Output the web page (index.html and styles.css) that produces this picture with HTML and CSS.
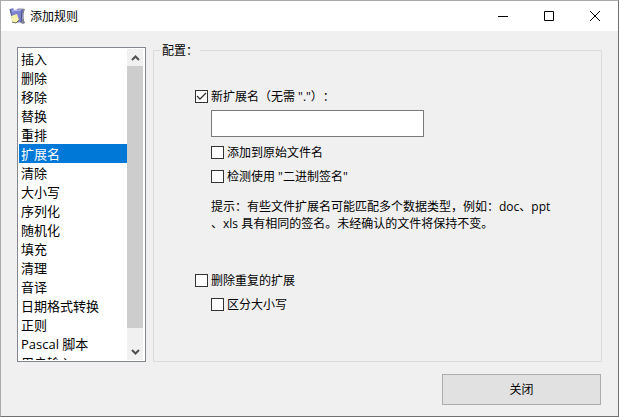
FILE: index.html
```html
<!DOCTYPE html>
<html lang="zh-CN">
<head>
  <meta charset="utf-8">
  <meta name="viewport" content="width=device-width">
  <title>添加规则</title>
  <link rel="stylesheet" href="styles.css">
</head>
<body>
<div class="window">
  <header class="titlebar">
    <svg class="logo" width="17" height="18" viewBox="0 0 17 18">
      <path d="M8 2l3-1 5 1-1 3v8l1 3-2 1-4-2z" fill="#84868f"/>
      <path d="M10 2l4-1M14 6v6" stroke="#d5d6dc" fill="none"/>
      <path d="M1 2l3-1 1 2 7-1 2 1-1 11-1 1-5 1-3-1z" fill="#7d82cc"/>
      <path d="M1 2l3 13M13 3l-1 12" stroke="#4b4f92" fill="none"/>
      <path d="M3 4l9-1" stroke="#b9bdf0"/>
      <path d="M2 9l6-2 2 6-3 3-4-1z" fill="#f5f3ae"/>
      <path d="M3 15l4 1 3-3" stroke="#6d6c55" fill="none"/>
    </svg>
    <h1>添加规则</h1>
    <button class="cap" aria-label="最小化"><svg width="10" height="10"><path d="M0 5.500h10" stroke="#000"/></svg></button>
    <button class="cap" aria-label="最大化"><svg width="10" height="10"><path d="M.5.5h9v9h-9z" stroke="#000" fill="none"/></svg></button>
    <button class="cap" aria-label="关闭窗口"><svg width="10" height="10"><path d="M0 0l10 10M10 0L0 10" stroke="#000"/></svg></button>
  </header>
  <main>
    <div class="list">
      <select size="16" aria-label="规则">
        <option>插入</option>
        <option>删除</option>
        <option>移除</option>
        <option>替换</option>
        <option>重排</option>
        <option selected>扩展名</option>
        <option>清除</option>
        <option>大小写</option>
        <option>序列化</option>
        <option>随机化</option>
        <option>填充</option>
        <option>清理</option>
        <option>音译</option>
        <option>日期格式转换</option>
        <option>正则</option>
        <option>Pascal 脚本</option>
        <option>用户输入</option>
      </select>
      <div class="scroll">
        <button aria-label="向上"><svg width="9" height="6"><path d="M1 5l3.500-3.500L8 5" stroke="#505050" stroke-width="2" fill="none"/></svg></button>
        <div class="thumb"></div>
        <button aria-label="向下"><svg width="9" height="6"><path d="M1 1l3.500 3.500L8 1" stroke="#505050" stroke-width="2" fill="none"/></svg></button>
      </div>
    </div>
    <fieldset>
      <legend>配置：</legend>
      <label class="check"><input type="checkbox" checked>新扩展名（无需 "."）：</label>
      <div class="sub">
        <input class="ext" type="text" aria-label="新扩展名">
        <label class="check"><input type="checkbox">添加到原始文件名</label>
        <label class="check"><input type="checkbox">检测使用 "二进制签名"</label>
        <p>提示：有些文件扩展名可能匹配多个数据类型，例如：doc、ppt<br>、xls 具有相同的签名。未经确认的文件将保持不变。</p>
      </div>
      <label class="check"><input type="checkbox">删除重复的扩展</label>
      <div class="sub">
        <label class="check"><input type="checkbox">区分大小写</label>
      </div>
    </fieldset>
  </main>
  <footer><button class="close">关闭</button></footer>
</div>
</body>
</html>
```

FILE: styles.css
```css
* {box-sizing:border-box;}
body {margin:0; background:#f0f0f0; color:#000; font:12px/17px "Open Sans","Noto Sans CJK SC",sans-serif; text-spacing-trim:space-all;}
button, input, select {font:inherit; color:inherit; margin:0; padding:0; border:0; border-radius:0;}
svg {display:block;}

.window {display:flex; flex-direction:column; min-height:100vh; border:1px solid #707070; border-top-color:#aaa; border-left-color:#aaa;}

.titlebar {display:flex; align-items:center; height:30px; padding-left:8px; background:#fff;}
.titlebar h1 {flex:1; margin:0 0 0 4px; font-size:12px; font-weight:normal;}
.cap {display:flex; align-items:center; justify-content:center; width:46px; height:28px; background:none;}

main {flex:1; display:flex; gap:7px; padding:11px 16px 0;}

.list {display:flex; width:129px; margin-top:5px; padding:1px; border:1px solid #828790; background:#fff;}
.list select {flex:1; min-width:0; height:0; min-height:100%; background:#fff; font-size:13px; outline:0; overflow-y:scroll; scrollbar-width:none;}
.list option {min-height:19px; padding:0 2px; line-height:19px;}
.list option:checked {background:#0078d7; color:#fff;}
.scroll {display:flex; flex-direction:column; width:17px; background:#f0f0f0; border-right:1px solid #fff;}
.scroll button {display:flex; align-items:center; justify-content:center; height:17px; background:none;}
.thumb {flex:1; margin-bottom:15px; background:#cdcdcd;}

fieldset {flex:1; min-width:0; margin:0; padding:25px 41px 0; border:1px solid #dcdcdc;}
legend {margin-left:-35px; padding:0 2px;}
.check {display:flex; align-items:center; gap:3px; height:24px;}
.check input {appearance:none; width:13px; height:13px; border:1px solid #333; background:#fff;}
.check input:checked {background:#fff url("data:image/svg+xml,%3Csvg xmlns='http://www.w3.org/2000/svg' width='11' height='11'%3E%3Cpath d='M1 5l3 3 6-6' fill='none' stroke='%23333' stroke-width='1.3'/%3E%3C/svg%3E");}
.sub {padding-left:16px;}
.ext {display:block; width:213px; height:27px; margin:2px 0 3px; padding:0 4px; border:1px solid #7a7a7a; background:#fff;}
p {margin:10px 0 36px; white-space:nowrap;}

footer {display:flex; justify-content:flex-end; padding:12px 17px 11px;}
.close {width:159px; height:31px; border:1px solid #adadad; background:#e1e1e1;}
```
